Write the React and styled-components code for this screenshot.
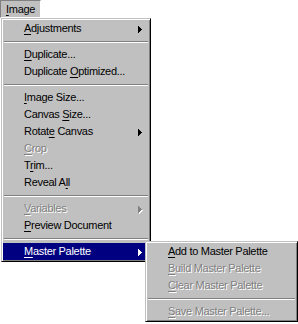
import React from 'react';
import styled, { createGlobalStyle, css } from 'styled-components';

const Global = createGlobalStyle`
  html, body { margin: 0; padding: 0; background: #fff; }
  body {
    font-family: "Liberation Sans", Arial, sans-serif;
    font-size: 11px;
  }
`;

const Screen = styled.div`
  width: 298px;
  height: 324px;
  overflow: hidden;
  background: #fff;
  display: flex;
  flex-direction: column;
  align-items: flex-start;
`;

const MenuTitle = styled.div`
  box-sizing: border-box;
  width: 41px;
  height: 18px;
  padding-left: 5px;
  background: #c0c0c0;
  border: 1px solid;
  border-color: #808080 #fff #fff #808080;
  line-height: 16px;
  color: #000;
  letter-spacing: -0.3px;
  white-space: nowrap;
`;

const Popup = styled.div`
  box-sizing: border-box;
  width: ${(p) => p.$width}px;
  background: #c0c0c0;
  border: 1px solid;
  border-color: #c0c0c0 #000 #000 #c0c0c0;
  box-shadow: inset 1px 1px #fff, inset -1px -1px #808080;
  padding: 1px;
  display: flex;
  flex-direction: column;
  ${(p) =>
    p.$sub
      ? css`
          position: absolute;
          top: -2px;
          left: 142px;
          z-index: 2;
        `
      : css`
          margin-left: 1px;
          position: relative;
        `}
`;

const Anchor = styled.div`
  position: relative;
`;

const Item = styled.div`
  display: flex;
  align-items: center;
  height: 17px;
  line-height: 17px;
  padding: 0 6px 0 21px;
  white-space: nowrap;
  letter-spacing: -0.3px;
  color: ${(p) => (p.$active ? '#fff' : p.$disabled ? '#808080' : '#000')};
  background: ${(p) => (p.$active ? '#000080' : 'transparent')};
  ${(p) =>
    p.$disabled &&
    css`
      text-shadow: 1px 1px 0 #fff;
    `}
`;

const Label = styled.span`
  flex: 1;
`;

const Key = styled.span`
  text-decoration: underline;
  text-decoration-thickness: 1px;
  text-underline-offset: 2px;
`;

const Separator = styled.div`
  box-sizing: border-box;
  height: 9px;
  padding: 4px 1px 0;
  &::before {
    content: '';
    display: block;
    height: 1px;
    background: #808080;
    border-bottom: 1px solid #fff;
  }
`;

const ArrowSvg = styled.svg`
  display: block;
  margin-top: 2px;
  flex: none;
`;

const TRI = 'M0 0h1v7h-1z M1 1h1v5h-1z M2 2h1v3h-1z M3 3h1v1h-1z';

function Arrow({ active, disabled }) {
  return (
    <ArrowSvg width="5" height="8" viewBox="0 0 5 8" shapeRendering="crispEdges">
      {disabled && <path d={TRI} fill="#fff" transform="translate(1 1)" />}
      <path d={TRI} fill={disabled ? '#808080' : active ? '#fff' : '#000'} />
    </ArrowSvg>
  );
}

function Text({ label, k }) {
  const i = k == null ? -1 : k;
  if (i < 0) return <Label>{label}</Label>;
  return (
    <Label>
      {label.slice(0, i)}
      <Key>{label[i]}</Key>
      {label.slice(i + 1)}
    </Label>
  );
}

const mainItems = [
  { label: 'Adjustments', k: 0, sub: true },
  { sep: true },
  { label: 'Duplicate...', k: 0 },
  { label: 'Duplicate Optimized...', k: 10 },
  { sep: true },
  { label: 'Image Size...', k: 0 },
  { label: 'Canvas Size...', k: 7 },
  { label: 'Rotate Canvas', k: 5, sub: true },
  { label: 'Crop', k: 0, disabled: true },
  { label: 'Trim...', k: 1 },
  { label: 'Reveal All', k: 8 },
  { sep: true },
  { label: 'Variables', k: 0, sub: true, disabled: true },
  { label: 'Preview Document', k: 0 },
  { sep: true },
  { label: 'Master Palette', k: 0, sub: true, active: true, open: true },
];

const subItems = [
  { label: 'Add to Master Palette', k: 0 },
  { label: 'Build Master Palette', k: 0, disabled: true },
  { label: 'Clear Master Palette', k: 0, disabled: true },
  { sep: true },
  { label: 'Save Master Palette...', k: 0, disabled: true },
];

function MenuRow({ it }) {
  return (
    <Item $active={it.active} $disabled={it.disabled}>
      <Text label={it.label} k={it.k} />
      {it.sub && <Arrow active={it.active} disabled={it.disabled} />}
    </Item>
  );
}

export default function App() {
  return (
    <Screen>
      <Global />
      <MenuTitle>
        <Key>I</Key>mage
      </MenuTitle>
      <Popup $width={150}>
        {mainItems.map((it, idx) => {
          if (it.sep) return <Separator key={idx} />;
          if (it.open) {
            return (
              <Anchor key={idx}>
                <MenuRow it={it} />
                <Popup $width={153} $sub>
                  {subItems.map((s, j) =>
                    s.sep ? <Separator key={j} /> : <MenuRow key={j} it={s} />
                  )}
                </Popup>
              </Anchor>
            );
          }
          return <MenuRow key={idx} it={it} />;
        })}
      </Popup>
    </Screen>
  );
}
